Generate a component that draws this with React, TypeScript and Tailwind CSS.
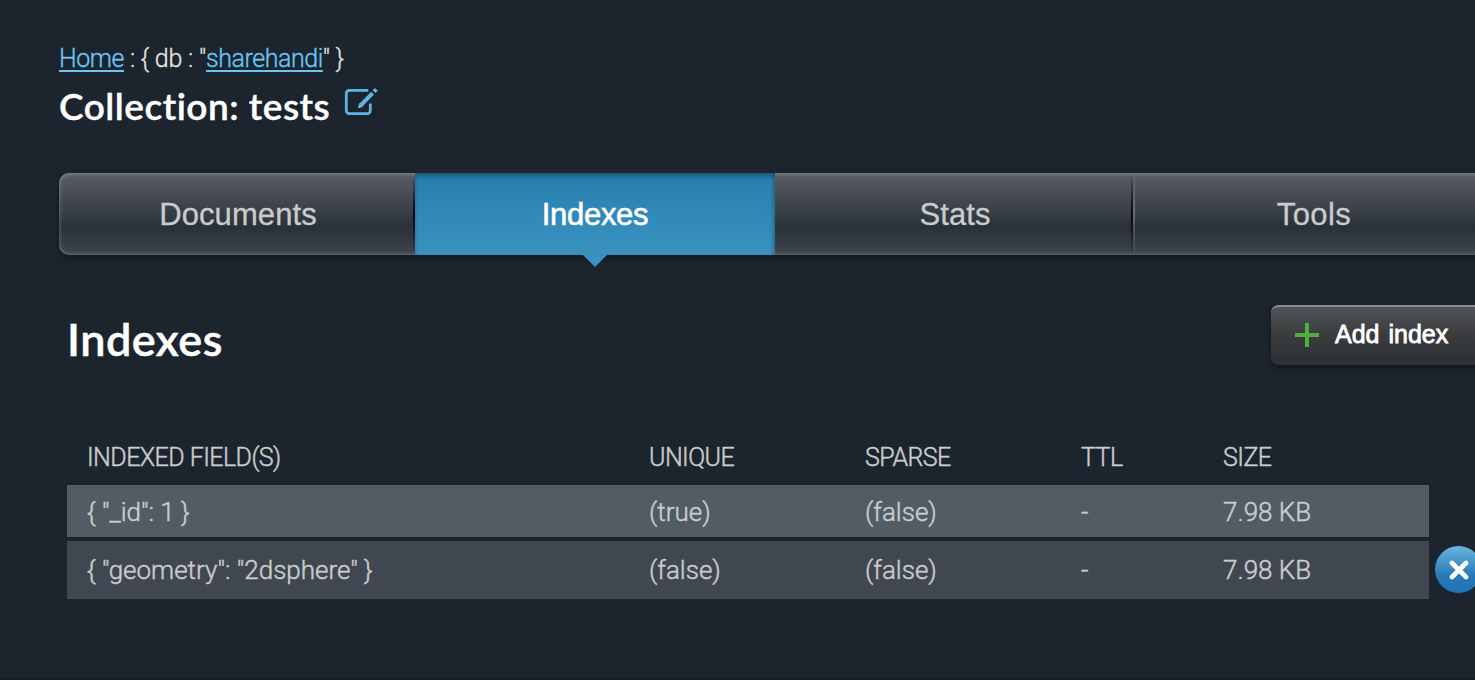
const tabs = ["Documents", "Indexes", "Stats", "Tools"];

const rows = [
  { field: '{ "_id": 1 }', unique: "(true)", sparse: "(false)", ttl: "-", size: "7.98 KB" },
  { field: '{ "geometry": "2dsphere" }', unique: "(false)", sparse: "(false)", ttl: "-", size: "7.98 KB" },
];

const columns = "grid grid-cols-[562px_216px_216px_142px_1fr] items-center pl-5 font-light [-webkit-text-stroke:0.45px_#c9cccd]";
const link = "text-[#6ac6f4] underline decoration-2 underline-offset-[3px] tracking-[-0.45px] [text-decoration-skip-ink:none] [-webkit-text-stroke:0.35px_#6ac6f4]";

function EditIcon() {
  return (
    <svg width="34" height="30" viewBox="0 0 34 30" fill="none" stroke="#5eb5e4" strokeWidth="2.8" className="ml-[14px] mt-[5px]">
      <path d="M24.3 3.4H5.3a3 3 0 0 0-3 3v17.2a3 3 0 0 0 3 3h18a3 3 0 0 0 3-3V16.5" />
      <path d="M17 18 28.6 6.2" strokeWidth="4" />
      <path d="m14.4 20.9 1.2-4.4 3.1 2.8z" fill="#5eb5e4" strokeWidth="1" />
      <path d="m30 4.7 2.4-2.4" strokeWidth="4" />
    </svg>
  );
}

function Divider() {
  return (
    <span className="absolute right-0 top-0 flex h-full">
      <span className="w-[2px] bg-linear-to-b from-transparent via-black/85 to-transparent" />
      <span className="w-[2px] bg-linear-to-b from-transparent via-white/25 to-transparent" />
    </span>
  );
}

function Tab({ label }: { label: string }) {
  if (label === "Indexes") {
    return (
      <div className="relative flex h-[82px] w-[360px] shrink-0 items-center justify-center bg-linear-to-b from-[#267eae] to-[#3a93bf] pt-[2px] text-white shadow-[inset_0_4px_6px_-2px_rgba(0,0,0,0.4),inset_-3px_0_4px_-2px_rgba(0,0,0,0.2)]">
        <span className="-tracking-[0.3px] [-webkit-text-stroke:0.6px_white]">{label}</span>
        <svg className="absolute left-[168px] top-[82px]" width="24" height="12">
          <path d="M0 0h24L12 12z" fill="#3a93bf" />
        </svg>
      </div>
    );
  }
  return (
    <div
      className={
        "relative flex h-[82px] shrink-0 items-center justify-center bg-[linear-gradient(to_bottom,#5a5e66_0%,#484c54_25%,#3b4249_42%,#293038_66%,#343b42_84%,#3d444b_100%)] pt-[2px] " +
        (label === "Documents"
          ? "w-[356px] rounded-l-[10px] pl-[2px] shadow-[inset_3px_0_4px_-2px_rgba(255,255,255,0.2),inset_0_4px_4px_-3px_rgba(255,255,255,0.25),inset_0_-4px_4px_-3px_rgba(255,255,255,0.2)]"
          : "w-[360px] shadow-[inset_0_4px_4px_-3px_rgba(255,255,255,0.25),inset_0_-4px_4px_-3px_rgba(255,255,255,0.2)]")
      }
    >
      <span className={label === "Tools" ? "mr-[2px] tracking-[0.4px] [-webkit-text-stroke:0.3px_#c9cccd]" : "tracking-[0.1px] [-webkit-text-stroke:0.3px_#c9cccd]"}>{label}</span>
      {label === "Documents" && (
        <span className="absolute right-0 top-0 h-full w-[2px] bg-linear-to-b from-transparent via-black/85 to-transparent" />
      )}
      {label === "Stats" && <Divider />}
    </div>
  );
}

export default function App() {
  return (
    <main className="h-[680px] w-[1475px] overflow-hidden border-b-2 border-[#181d25] bg-[#1c242d] font-['Roboto',sans-serif] text-[#c9cccd]">
      <nav className="ml-[59px] mt-[43px] h-8 whitespace-pre text-[25px] leading-8 font-light tracking-[-0.2px] text-[#e4e4e0] [-webkit-text-stroke:0.3px_#e4e4e0]">
        <a className={link}>Home</a>
        {' : { db : "'}
        <a className={link}>sharehandi</a>
        {'" }'}
      </nav>
      <header className="ml-[59px] mt-[7px] flex h-12 items-start">
        <h1 className="font-['Lato',sans-serif] text-[37px] leading-[47px] font-semibold tracking-[0.5px] text-white [-webkit-text-stroke:0.4px_white] [font-variant-ligatures:none]">Collection: tests</h1>
        <EditIcon />
      </header>
      <div className="ml-[59px] mt-[43px] flex h-[82px] w-[1440px] rounded-l-[10px] font-['Liberation_Sans',sans-serif] text-[31px] shadow-[0_3px_6px_rgba(0,0,0,0.35)]">
        {tabs.map((label) => (
          <Tab key={label} label={label} />
        ))}
      </div>
      <section className="ml-[67px] mt-[50px]">
        <div className="flex h-[70px] items-start justify-between">
          <h2 className="font-['Lato',sans-serif] text-[45px] leading-[68px] font-semibold tracking-[0.5px] text-white [-webkit-text-stroke:0.5px_white]">Indexes</h2>
          <button className="mr-[-20px] flex h-[60px] w-[224px] items-center rounded-[8px] border-t-2 border-[#8b8f93] bg-[linear-gradient(to_bottom,#4f5358,#3a3b3c_50%,#2b3037)] pb-[2px] pl-6 shadow-[0_3px_5px_rgba(0,0,0,0.4)]">
            <svg width="24" height="24" stroke="#50ad44" strokeWidth="4">
              <path d="M0 12h24M12 0v24" />
            </svg>
            <span className="ml-4 whitespace-nowrap font-['Liberation_Sans',sans-serif] text-[25px] [word-spacing:2px] font-normal text-white [-webkit-text-stroke:0.8px_white]">Add index</span>
          </button>
        </div>
        <div className={columns + " mt-[52px] h-[58px] pt-[3px] text-[25px] tracking-[-0.55px]"}>
          <span>INDEXED FIELD(S)</span>
          <span>UNIQUE</span>
          <span>SPARSE</span>
          <span>TTL</span>
          <span>SIZE</span>
        </div>
        <div className="flex flex-col gap-1">
          {rows.map((row, i) => (
            <div key={row.field} className="flex items-center">
              <div className={columns + " w-[1362px] shrink-0 text-[26px] " + (i === 0 ? "h-[52px] bg-[#525c64] pt-[2px]" : "h-[58px] bg-[#414751]")}>
                <span>{row.field}</span>
                <span>{row.unique}</span>
                <span>{row.sparse}</span>
                <span>{row.ttl}</span>
                <span>{row.size}</span>
              </div>
              {i === 1 && (
                <span className="mb-px ml-[6px] flex size-[47px] shrink-0 items-center justify-center rounded-full bg-[linear-gradient(to_bottom,#68b5dd,#2479b9_65%,#1f74b8)]">
                  <svg width="20" height="20" stroke="white" strokeWidth="4.6" strokeLinecap="round">
                    <path d="m3 3 14 14M17 3 3 17" />
                  </svg>
                </span>
              )}
            </div>
          ))}
        </div>
      </section>
    </main>
  );
}
